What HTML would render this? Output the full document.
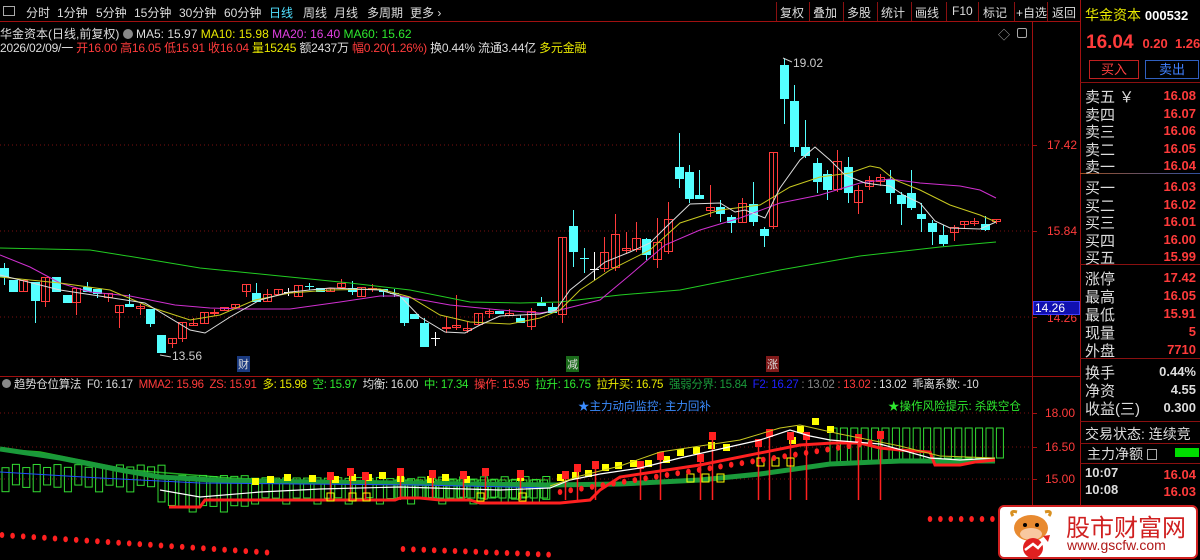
<!DOCTYPE html>
<html><head><meta charset="utf-8">
<style>
*{margin:0;padding:0;box-sizing:border-box}
body{width:1200px;height:560px;background:#000;overflow:hidden;position:relative;font-family:"Liberation Sans","Noto Sans CJK SC",sans-serif;color:#ddd}
.a{position:absolute;white-space:nowrap}
.tb{font-size:12px;color:#ddd;top:4px}
.r{color:#ff3b3b}.y{color:#e8e800}.g{color:#2ee82e}.m{color:#e040e0}.w{color:#ddd}.b{color:#3b8cff}
.rp{font-size:14px;left:1085px}
.rv{font-size:13px;font-weight:bold;right:4px;color:#ff3b3b}
.hl{position:absolute;left:1080px;width:120px;height:1px;background:#8a1010}
.sep{position:absolute;top:2px;width:1px;height:19px;background:#8a1010}
</style></head><body>
<svg id="s" width="1200" height="560" style="position:absolute;left:0;top:0"></svg>

<div class="a" style="left:0;top:21px;width:1080px;height:1px;background:#a01010"></div>
<div class="a" style="left:3px;top:6px;width:12px;height:10px;border:1px solid #aaa"></div>
<div class="a tb" style="left:26px">分时</div><div class="a tb" style="left:57px">1分钟</div><div class="a tb" style="left:96px">5分钟</div><div class="a tb" style="left:134px">15分钟</div><div class="a tb" style="left:179px">30分钟</div><div class="a tb" style="left:224px">60分钟</div><div class="a tb" style="left:269px;color:#50e0ff">日线</div><div class="a tb" style="left:303px">周线</div><div class="a tb" style="left:334px">月线</div><div class="a tb" style="left:367px">多周期</div><div class="a tb" style="left:410px">更多 ›</div>
<div class="sep" style="left:776px"></div><div class="sep" style="left:809px"></div><div class="sep" style="left:843px"></div><div class="sep" style="left:877px"></div><div class="sep" style="left:911px"></div><div class="sep" style="left:946px"></div><div class="sep" style="left:978px"></div><div class="sep" style="left:1014px"></div><div class="sep" style="left:1047px"></div>
<div class="a tb" style="left:780px">复权</div><div class="a tb" style="left:813px">叠加</div><div class="a tb" style="left:847px">多股</div><div class="a tb" style="left:881px">统计</div><div class="a tb" style="left:915px">画线</div><div class="a tb" style="left:952px">F10</div><div class="a tb" style="left:983px">标记</div><div class="a tb" style="left:1016px">+自选</div><div class="a tb" style="left:1052px">返回</div>

<div class="a" style="left:0;top:25px;font-size:12px">华金资本(日线,前复权) <span style="display:inline-block;width:10px;height:10px;border-radius:50%;background:#888;vertical-align:-1px"></span> MA5: 15.97 <span class="y">MA10: 15.98</span> <span class="m">MA20: 16.40</span> <span class="g">MA60: 15.62</span></div>
<div class="a" style="left:0;top:39px;font-size:12px;letter-spacing:-0.2px">2026/02/09/一 <span class="r">开16.00 高16.05 低15.91 收16.04</span> <span class="y">量15245</span> 额2437万 <span class="r">幅0.20(1.26%)</span> 换0.44% 流通3.44亿 <span class="y">多元金融</span></div>
<div class="a" style="left:998px;top:26px;font-size:12px;color:#aaa">◇</div>
<div class="a" style="left:1017px;top:28px;width:10px;height:10px;border:1px solid #aaa;border-radius:2px"></div>

<div class="a r" style="left:1047px;top:138px;font-size:12px">17.42</div>
<div class="a r" style="left:1047px;top:224px;font-size:12px">15.84</div>
<div class="a r" style="left:1047px;top:311px;font-size:12px">14.26</div>
<div class="a" style="left:1033px;top:301px;width:47px;height:14px;background:#1010b0;border:1px solid #4040ff;font-size:12px;color:#fff;padding-left:1px;line-height:12px">14.26</div>
<div class="a r" style="left:1045px;top:406px;font-size:12px">18.00</div>
<div class="a r" style="left:1045px;top:440px;font-size:12px">16.50</div>
<div class="a r" style="left:1045px;top:472px;font-size:12px">15.00</div>
<div class="a" style="left:0;top:376px;width:1080px;height:1px;background:#a01010"></div>

<div class="a" style="left:237px;top:356px;font-size:11px;background:#1a3a80;color:#ddd;padding:0 1px">财</div>
<div class="a" style="left:566px;top:356px;font-size:11px;background:#1a6a1a;color:#ddd;padding:0 1px">减</div>
<div class="a" style="left:766px;top:356px;font-size:11px;background:#801a1a;color:#ddd;padding:0 1px">涨</div>

<div class="a" style="left:2px;top:376px;font-size:11.5px;letter-spacing:-0.3px"><span style="display:inline-block;width:9px;height:9px;border-radius:50%;background:#888"></span> 趋势仓位算法 &nbsp;F0: 16.17 &nbsp;<span class="r">MMA2: 15.96 &nbsp;ZS: 15.91</span> &nbsp;<span class="y">多: 15.98</span> &nbsp;<span class="g">空: 15.97</span> &nbsp;均衡: 16.00 &nbsp;<span class="g">中: 17.34</span> &nbsp;<span class="r">操作: 15.95</span> &nbsp;<span class="g">拉升: 16.75</span> &nbsp;<span class="y">拉升买: 16.75</span> &nbsp;<span style="color:#1a9a3a">强弱分界: 15.84</span> &nbsp;<span style="color:#2020ff">F2: 16.27</span> <span style="color:#888">: 13.02</span> <span class="r">: 13.02</span> : 13.02 &nbsp;乖离系数: -10</div>
<div class="a" style="left:578px;top:398px;font-size:11.5px;color:#3b8cff">★主力动向监控: 主力回补</div>
<div class="a" style="left:888px;top:398px;font-size:11.5px;color:#2ee82e">★操作风险提示: 杀跌空仓</div>

<div class="a" style="left:1080px;top:0;width:1px;height:560px;background:#a01010"></div>
<div class="a" style="left:1085px;top:5px;font-size:14px;color:#e8e800">华金资本 <span style="color:#fff;font-weight:bold;font-size:13px">000532</span></div>
<div class="a" style="left:1086px;top:32px;font-size:19px;font-weight:bold;color:#ff3b3b">16.04 <span style="font-size:13px">&nbsp;0.20 &nbsp;1.26</span></div>
<div class="a" style="left:1089px;top:60px;width:50px;height:19px;border:1px solid #c02020;color:#ff4040;font-size:13px;text-align:center;line-height:17px">买入</div>
<div class="a" style="left:1145px;top:60px;width:54px;height:19px;border:1px solid #3060c0;color:#4080ff;font-size:13px;text-align:center;line-height:17px">卖出</div>
<div class="hl" style="top:82px"></div>
<div class="hl" style="top:173px;background:linear-gradient(90deg,#a05020,#3050a0)"></div>
<div class="hl" style="top:264px"></div>
<div class="hl" style="top:358px"></div>
<div class="hl" style="top:421px"></div>
<div class="hl" style="top:443px"></div>
<div class="hl" style="top:463px"></div>
<div id="rp"></div>
<div class="a" style="left:1087px;top:444px;font-size:14px">主力净额 <span style="display:inline-block;width:10px;height:11px;border:1px solid #aaa;vertical-align:-1px"></span></div>
<div class="a" style="left:1175px;top:448px;width:24px;height:9px;background:#00dd00"></div>
<div class="a" style="left:1085px;top:424px;font-size:14px">交易状态: 连续竞</div>

<div class="a" style="left:998px;top:505px;width:200px;height:54px;background:#fff;border:2px solid #d02020;border-radius:6px"></div>
<svg class="a" style="left:1003px;top:508px" width="56" height="50">
<path d="M10 8 Q6 2 14 4 M46 8 Q50 2 42 4" stroke="#d89020" stroke-width="3" fill="none"/>
<ellipse cx="28" cy="20" rx="17" ry="13" fill="#e88a30"/>
<ellipse cx="28" cy="26" rx="11" ry="6" fill="#f8c8a0"/>
<circle cx="22" cy="17" r="2" fill="#000"/><circle cx="34" cy="17" r="2" fill="#000"/>
<circle cx="30" cy="40" r="10" fill="#e02020"/>
<path d="M22 42 L30 36 L35 40 L44 30" stroke="#fff" stroke-width="2.5" fill="none"/>
<path d="M40 28 L47 27 L45 34Z" fill="#e02020"/>
</svg>
<div class="a" style="left:1066px;top:508px;font-size:24px;color:#d02020;letter-spacing:0px">股市财富网</div>
<div class="a" style="left:1067px;top:537px;font-size:14px;color:#b01818">www.gscfw.com</div>

<script>
var S=document.getElementById('s'),h='';
function L(x1,y1,x2,y2,c,w,d){h+='<line x1="'+x1+'" y1="'+y1+'" x2="'+x2+'" y2="'+y2+'" stroke="'+c+'" stroke-width="'+(w||1)+'"'+(d?' stroke-dasharray="'+d+'"':'')+'/>';}
function P(pts,c,w){h+='<polyline fill="none" stroke="'+c+'" stroke-width="'+(w||1)+'" points="'+pts.map(function(p){return p.join(',')}).join(' ')+'"/>';}
function R(x,y,w,hh,f,s){h+='<rect x="'+x+'" y="'+y+'" width="'+w+'" height="'+Math.max(hh,1)+'" fill="'+f+'"'+(s?' stroke="'+s+'"':'')+'/>';}
[145,231,317].forEach(function(y){L(0,y,1032,y,'#7a1010',1,'1,3')});
[413,447,479].forEach(function(y){L(0,y,1032,y,'#7a1010',1,'1,3')});
L(1032.5,22,1032.5,560,'#a01010');
[145,231,317,413,447,479].forEach(function(y){L(1032,y+.5,1037,y+.5,'#a01010')});
var C=[[4,268,277,'c',263,285],[13,280,292,'c'],[23,280,292,'r'],[35,282,301,'c',282,323],[45,277,302,'r',277,307],[56,277,292,'c'],[67,295,303,'c'],[76,288,303,'r',288,315],[87,287,292,'c',282],[97,289,294,'c',289,298],[108,293,298,'r',293,302],[119,305,313,'r',305,328],[129,304,307,'c',294],[140,306,309,'r',304,315],[150,309,324,'c',309,327],[161,335,353,'c'],[172,338,344,'r',338,348],[182,322,339,'r',322,342],[193,323,326,'r',318],[204,312,324,'r'],[214,312,313,'r',309,316],[224,307,311,'r'],[235,304,308,'r'],[246,284,292,'r',284,297],[256,293,302,'c',283],[267,294,302,'r',289],[278,289,295,'r'],[288,292,292,'w',288,296],[298,285,297,'r'],[309,286,286,'x',283,290],[320,288,292,'c'],[330,288,292,'r'],[341,283,288,'r',279],[352,288,292,'c',281,295],[361,287,297,'r'],[372,288,288,'R',284,292],[383,289,292,'c',289,297],[394,293,293,'x',289,297],[404,297,323,'c',297,326],[414,314,319,'c'],[424,323,347,'c',318],[435,338,338,'w',332,346],[446,327,329,'r',317,333],[456,325,328,'r',295,330],[467,328,331,'r',322,333],[478,313,325,'r'],[489,311,314,'r',309,318],[499,311,314,'c'],[509,313,316,'r',309],[520,318,323,'c',315],[531,311,327,'r',308,330],[541,303,306,'c',297],[552,307,313,'c',303],[562,237,315,'r',237,323],[573,226,252,'c',210,267],[584,258,258,'x',248,273],[594,269,269,'w',252,280],[604,252,269,'r',237,272],[615,234,268,'r',214,271],[626,248,251,'r',232,254],[636,238,250,'r',222,252],[646,239,255,'c',238,260],[657,242,260,'r',218,268],[668,219,252,'r',202,254],[679,167,179,'c',133,188],[689,172,199,'c',165,203],[699,195,199,'c',170],[710,207,211,'r',185,217],[720,207,214,'c',200,222],[731,217,223,'c',215,233],[742,203,223,'r',198],[753,204,222,'c',182,226],[764,229,236,'c',227,247],[773,152,227,'r',152,229],[784,65,99,'c',58,124],[794,101,147,'c',85,152],[805,147,156,'c',120,158],[817,163,182,'c',158,193],[827,174,190,'c',170,200],[837,161,190,'r',150,192],[848,167,193,'c',157,203],[858,190,203,'r',185,214],[869,180,187,'r',176,190],[880,177,182,'r',174,186],[890,179,193,'c',170,204],[901,195,204,'c',192,225],[911,193,208,'c',170,210],[921,214,219,'c',203,232],[932,223,232,'c',220,245],[943,235,244,'c',225,246],[954,227,233,'r',225,241],[964,221,225,'r',221,228],[974,221,224,'r',218,226],[985,224,230,'c',216,231],[996,219,222,'r',219,224]];
C.forEach(function(k){var x=k[0],t=k[1],b=k[2],ty=k[3],hi=k[4]||t,lo=k[5]||b;
 var col=ty=='c'||ty=='x'?'#54ffff':(ty=='w'?'#fff':'#ff3b3b');
 L(x+.5,hi,x+.5,lo,col);
 if(ty=='c')R(x-4,t,9,b-t,'#54ffff');
 else if(ty=='r')R(x-3.5,t+.5,8,Math.max(b-t-1,1),'none','#ff3b3b');
 else L(x-4,t+.5,x+5,t+.5,col);});
P([[0,248],[90,250],[140,258],[200,268],[280,276],[350,283],[410,290],[470,302],[520,303],[560,302],[620,295],[680,290],[720,282],[780,270],[860,256],[940,247],[996,242]],'#22cc22');
P([[0,255],[30,267],[60,283],[90,292],[130,296],[175,305],[210,308],[245,309],[290,309],[340,302],[380,296],[400,296],[450,305],[500,310],[540,313],[560,310],[600,300],[630,275],[665,245],[700,230],[740,218],[780,203],[820,195],[860,183],[890,179],[920,183],[960,186],[980,190],[996,198]],'#d030d0');
P([[0,277],[60,283],[110,290],[150,307],[190,320],[220,315],[255,300],[290,293],[330,290],[380,289],[410,297],[440,315],[470,322],[510,324],[540,318],[560,310],[580,290],[610,270],[650,250],[680,223],[720,210],[760,205],[790,187],[820,177],[850,173],[870,166],[880,168],[895,180],[920,190],[950,205],[980,215],[996,222]],'#c8c820');
P([[0,275],[60,290],[145,303],[190,330],[205,333],[230,317],[260,300],[290,292],[330,288],[380,290],[400,296],[420,317],[445,332],[465,333],[480,325],[500,316],[540,314],[556,310],[570,290],[585,278],[605,262],[630,252],[650,243],[665,228],[690,204],[720,203],[735,212],[745,210],[765,218],[780,188],[800,160],[815,147],[830,160],[845,175],[865,183],[880,185],[890,186],[905,196],[920,203],[935,221],[950,228],[980,229],[996,222]],'#ddd');
h+='<text x="793" y="67" fill="#ccc" font-size="12" font-family="Liberation Sans">19.02</text>';
L(783,58,792,62,'#ccc');
h+='<text x="172" y="360" fill="#ccc" font-size="12" font-family="Liberation Sans">13.56</text>';
L(160,355,171,357,'#ccc');
P([[0,449],[40,452],[80,460],[130,470],[230,478],[330,482],[540,484]],'#22aa22',1.5);
for(var x=2;x<550;x+=10.4){var base=x<160?470:(x<250?480:482);var t=base-4+Math.sin(x*.3)*3, b=base+18+(x>150&&x<250?10:0)+Math.cos(x*.2)*4;
 h+='<rect x="'+x+'" y="'+t+'" width="7" height="'+(b-t)+'" fill="none" stroke="#33dd33"/>';}
for(var x=830;x<1000;x+=10.4){var t=428, b=462-(x>930?4:0);
 h+='<rect x="'+x+'" y="'+t+'" width="7" height="'+(b-t)+'" fill="none" stroke="#33dd33"/>';}
for(var x=395;x<550;x+=10.4){h+='<rect x="'+x+'" y="480" width="7" height="18" fill="none" stroke="#33dd33"/>';}
P([[0,449],[60,458],[120,470],[160,477],[230,481],[330,482],[550,485],[620,484],[700,480],[760,474],[830,464],[900,461],[995,461]],'#1a9a3a',5);
P([[0,472],[100,478],[200,483],[300,484],[420,485],[550,488]],'#2050ff',1);
P([[169,507],[200,507],[205,500],[395,500],[400,498],[420,498],[440,500],[470,500],[480,503],[560,503],[590,500],[600,490],[620,477],[700,465],[800,445],[833,443],[860,443],[880,448],[900,450],[930,452],[935,465],[960,465],[975,462],[995,460]],'#ff2020',3);
var Y=[[255,484],[270,482],[287,480],[312,481],[335,482],[352,480],[368,480],[382,478],[400,481],[430,482],[445,480],[466,482],[520,480],[560,480],[575,478],[588,476],[605,470],[618,468],[633,466],[648,466],[666,462],[680,455],[696,453],[711,448],[726,450],[792,443],[800,432],[815,424],[830,432]];
Y.forEach(function(p){R(p[0]-3,p[1]-6,7,7,'#ffff00');});
[[330,478],[350,474],[365,478],[400,474],[432,476],[463,477],[485,474],[520,476],[565,477],[577,470],[595,467],[640,467],[660,458],[700,460],[712,438],[758,445],[769,435],[790,438],[806,438],[858,440],[880,437]].forEach(function(p){R(p[0]-3,p[1]-6,7,8,'#ff2020');L(p[0]+.5,p[1],p[0]+.5,500,'#ff2020',1.5);});
[[330,497],[352,497],[366,497],[480,497],[522,497],[690,478],[705,478],[720,478],[760,462],[775,462],[790,462]].forEach(function(p){R(p[0]-3,p[1]-4,7,8,'none','#ffff00');});
P([[160,490],[200,497],[260,492],[320,489],[400,487],[500,490],[550,488],[570,480],[600,474],[640,468],[680,458],[720,449],[760,440],[790,430],[810,436],[830,440],[880,444],[930,458],[960,460],[995,458]],'#fff',1.2);
P([[550,486],[580,476],[620,466],[660,452],[700,446],[740,440],[780,428],[800,425],[840,434],[900,446],[940,456],[995,458]],'#c8c820',1);
function dot(x,y){h+='<ellipse cx="'+x+'" cy="'+y+'" rx="2.3" ry="3" fill="#ff2020"/>';}
for(var i=0;i<26;i++)dot(2+i*10.6,535+i*0.7);
for(var i=0;i<15;i++)dot(403+i*10.4,549+i*0.4);
for(var i=0;i<7;i++)dot(930+i*10.4,519);
for(var i=0;i<30;i++)dot(560+i*10.7,492-i*1.7);
S.innerHTML=h;
var rows=[['卖五 ￥','16.08',86],['卖四','16.07',104],['卖三','16.06',121],['卖二','16.05',139],['卖一','16.04',156],['买一','16.03',177],['买二','16.02',195],['买三','16.01',212],['买四','16.00',230],['买五','15.99',247],['涨停','17.42',268],['最高','16.05',286],['最低','15.91',304],['现量','5',322],['外盘','7710',340],['换手','0.44%',362,1],['净资','4.55',380,1],['收益(三)','0.300',398,1],['10:07','16.04',465,2],['10:08','16.03',482,2]];
var o='';rows.forEach(function(r){o+='<div class="a rp" style="top:'+r[2]+'px;font-size:'+(r[3]==2?13:15)+'px;'+(r[3]==2?'font-weight:bold':'')+'">'+r[0]+'</div><div class="a rv" style="top:'+(r[2]+2)+'px;'+(r[3]==1?'color:#ddd':'')+'">'+r[1]+'</div>';});
document.getElementById('rp').innerHTML=o;
</script>
</body></html>
